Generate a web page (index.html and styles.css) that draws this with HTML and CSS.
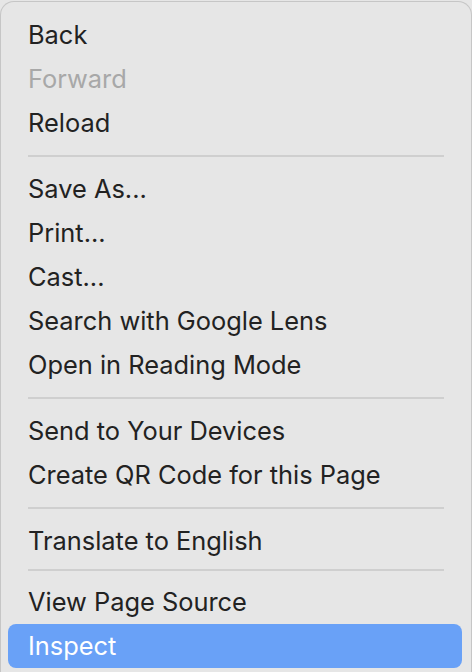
FILE: index.html
```html
<!DOCTYPE html>
<html lang="en">
<head>
    <meta charset="UTF-8">
    <title>Context Menu</title>
    <link rel="stylesheet" href="styles.css">
</head>
<body>
    <div class="menu">
        <div class="item">Back</div>
        <div class="item disabled">Forward</div>
        <div class="item">Reload</div>
        <div class="sep"></div>
        <div class="item">Save As...</div>
        <div class="item">Print...</div>
        <div class="item">Cast...</div>
        <div class="item">Search with Google Lens</div>
        <div class="item">Open in Reading Mode</div>
        <div class="sep"></div>
        <div class="item">Send to Your Devices</div>
        <div class="item">Create QR Code for this Page</div>
        <div class="sep"></div>
        <div class="item">Translate to English</div>
        <div class="sep short"></div>
        <div class="item">View Page Source</div>
        <div class="item active">Inspect</div>
    </div>
</body>
</html>
```

FILE: styles.css
```css
html, body {
    margin: 0;
    padding: 0;
    height: 100%;
    overflow: hidden;
    background: #e6e6e6;
}
body {
    padding-top: 1px;
    font-family: Inter, "Open Sans", sans-serif;
    color: #222222;
}

.menu {
    background: #e6e6e6;
    border: 1px solid #c6c6c6;
    border-bottom: none;
    border-radius: 14px 14px 0 0;
    padding: 11px 9px 0 7px;
    height: 700px;
}

.item {
    height: 44px;
    line-height: 44px;
    padding-left: 20px;
    font-size: 25.4px;
    border-radius: 8px;
}

.disabled {
    color: #a8a8a8;
}

.active {
    background: #69a1f7;
    color: #ffffff;
}

.sep {
    height: 2px;
    background: #cfcfcf;
    margin: 10px 18px 10px 20px;
}

.short {
    margin: 6px 18px 9px 20px;
}
```
